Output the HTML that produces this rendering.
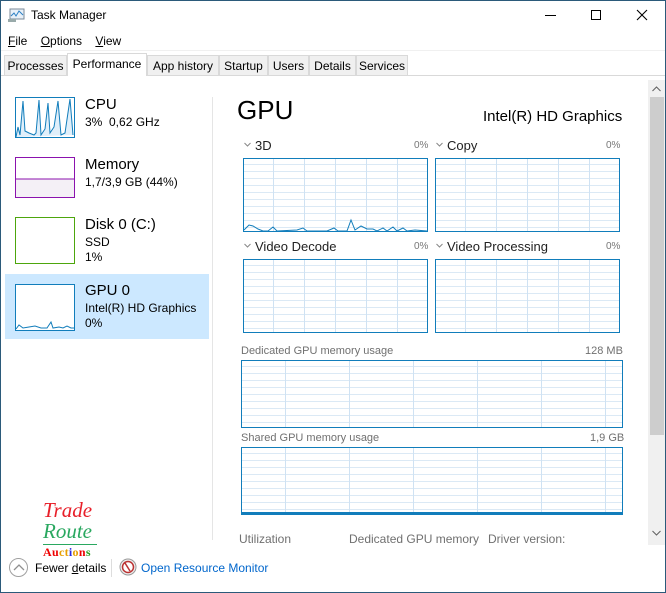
<!DOCTYPE html>
<html><head><meta charset="utf-8"><style>
*{margin:0;padding:0;box-sizing:border-box}
body{width:666px;height:593px;overflow:hidden;background:#fff;font-family:"Liberation Sans",sans-serif;color:#000;position:relative}
.a{position:absolute;white-space:nowrap}
.win{position:absolute;left:0;top:0;width:666px;height:593px;border:1px solid #2b5a7a}
.tab{position:absolute;top:55px;height:21px;background:#f0f0f0;border:1px solid #d9d9d9;font-size:12px;padding:3px 0 0 0;text-align:center}
.lbl{font-size:13px;color:#222}
.pct{font-size:10px;color:#777}
.g{position:absolute}
.chev{display:inline-block;width:7px;height:7px;margin-right:4px;vertical-align:2px}
</style></head><body>
<div class="win"></div>
<svg class="a" style="left:8px;top:8px" width="17" height="15"><rect x="2" y="1" width="14" height="10" fill="#e8f0f8" stroke="#7a8a99"/><polyline points="3,8 6,5 8,8 11,3 15,7" fill="none" stroke="#2a7fc4"/><rect x="0" y="11" width="8" height="3" fill="#9aa"/></svg>
<div class="a" style="left:31px;top:8px;font-size:12px">Task Manager</div>
<div class="a" style="left:545px;top:15px;width:11px;height:1px;background:#000"></div>
<div class="a" style="left:591px;top:10px;width:10px;height:10px;border:1px solid #000"></div>
<svg class="a" style="left:636px;top:9px" width="12" height="12"><path d="M1,1 L11,11 M11,1 L1,11" stroke="#000" stroke-width="1.1"/></svg>
<div class="a" style="left:8px;top:34px;font-size:12px"><u>F</u>ile&nbsp;&nbsp;&nbsp;&nbsp;<u>O</u>ptions&nbsp;&nbsp;&nbsp;&nbsp;<u>V</u>iew</div>
<div class="a" style="left:1px;top:50px;width:664px;height:1px;background:#f0f0f0"></div>
<div class="a" style="left:1px;top:75px;width:664px;height:1px;background:#d9d9d9"></div>
<div class="tab" style="left:4px;width:63px">Processes</div>
<div class="tab" style="left:67px;width:80px;top:53px;height:23px;background:#fff;border-bottom:none;padding-top:3px">Performance</div>
<div class="tab" style="left:147px;width:72px">App history</div>
<div class="tab" style="left:219px;width:49px">Startup</div>
<div class="tab" style="left:268px;width:41px">Users</div>
<div class="tab" style="left:309px;width:47px">Details</div>
<div class="tab" style="left:356px;width:52px">Services</div>

<svg class="a" style="left:15px;top:97px" width="60" height="41"><rect x="0.5" y="0.5" width="59" height="40" fill="#fff" stroke="#117dbb"/><polyline points="1,40 3,30 5,38 8,4 10,34 14,36 19,38 21,36 24,3 26,38 30,32 33,6 35,36 39,30 43,4 46,38 50,36 55,2 58,38" fill="#e0effa" stroke="#117dbb"/></svg>
<div class="a" style="left:85px;top:96px;font-size:15px">CPU</div>
<div class="a" style="left:85px;top:115px;font-size:12px">3%&nbsp; 0,62 GHz</div>
<svg class="a" style="left:15px;top:157px" width="60" height="41"><rect x="0.5" y="0.5" width="59" height="40" fill="#fff" stroke="#8b12ae"/><rect x="1" y="22" width="58" height="18" fill="#f4f0f6"/><line x1="1" y1="22" x2="59" y2="22" stroke="#8b12ae"/></svg>
<div class="a" style="left:85px;top:156px;font-size:15px">Memory</div>
<div class="a" style="left:85px;top:175px;font-size:12px">1,7/3,9 GB (44%)</div>
<svg class="a" style="left:15px;top:217px" width="60" height="47"><rect x="0.5" y="0.5" width="59" height="46" fill="#fff" stroke="#4da60c"/></svg>
<div class="a" style="left:85px;top:216px;font-size:15px">Disk 0 (C:)</div>
<div class="a" style="left:85px;top:235px;font-size:12px">SSD</div>
<div class="a" style="left:85px;top:250px;font-size:12px">1%</div>
<div class="a" style="left:5px;top:274px;width:204px;height:65px;background:#cce8ff"></div>
<svg class="a" style="left:15px;top:284px" width="60" height="47"><rect x="0.5" y="0.5" width="59" height="46" fill="#fff" stroke="#117dbb"/><polyline points="1,45 4,41 8,44 14,43 20,42 26,44 32,44 36,38 38,44 44,43 48,44 52,42 56,44 59,44" fill="none" stroke="#117dbb"/></svg>
<div class="a" style="left:85px;top:282px;font-size:15px">GPU 0</div>
<div class="a" style="left:85px;top:301px;font-size:12px">Intel(R) HD Graphics</div>
<div class="a" style="left:85px;top:316px;font-size:12px">0%</div>
<div class="a" style="left:212px;top:97px;width:1px;height:443px;background:#e5e5e5"></div>

<div class="a" style="left:237px;top:95px;font-size:26px">GPU</div>
<div class="a" style="left:483px;top:108px;font-size:15px">Intel(R) HD Graphics</div>

<svg width="0" height="0" style="position:absolute"><defs>
<pattern id="p" width="31" height="7" patternUnits="userSpaceOnUse"><line x1="0" y1="6.5" x2="31" y2="6.5" stroke="#dbe9f5"/><line x1="30.5" y1="0" x2="30.5" y2="7" stroke="#cfe2f3"/></pattern>
<pattern id="q" width="64" height="7" patternUnits="userSpaceOnUse"><line x1="0" y1="6.5" x2="64" y2="6.5" stroke="#dbe9f5"/><line x1="44.5" y1="0" x2="44.5" y2="7" stroke="#cfe2f3"/></pattern>
<symbol id="cv" viewBox="0 0 7 7"><polyline points="0.5,2 3.5,5 6.5,2" fill="none" stroke="#888"/></symbol>
</defs></svg>

<div class="a lbl" style="left:244px;top:138px"><svg class="chev"><use href="#cv"/></svg>3D</div>
<div class="a pct" style="left:414px;top:140px">0%</div>
<div class="a lbl" style="left:436px;top:138px"><svg class="chev"><use href="#cv"/></svg>Copy</div>
<div class="a pct" style="left:606px;top:140px">0%</div>
<svg class="g" style="left:243px;top:158px" width="185" height="74"><rect width="185" height="74" fill="url(#p)"/><polyline points="1,72 6,67 10,68 15,71 20,73 25,73 30,69 34,73 54,72 60,70 64,73 84,73 91,70 95,73 104,73 108,62 112,72 118,68 124,71 130,71 134,73 140,70 144,73 150,69 154,73 160,70 164,73 172,72 184,73" fill="none" stroke="#117dbb"/><rect x="0.5" y="0.5" width="184" height="73" fill="none" stroke="#117dbb"/></svg>
<svg class="g" style="left:435px;top:158px" width="185" height="74"><rect width="185" height="74" fill="url(#p)"/><rect x="0.5" y="0.5" width="184" height="73" fill="none" stroke="#117dbb"/></svg>

<div class="a lbl" style="left:244px;top:239px"><svg class="chev"><use href="#cv"/></svg>Video Decode</div>
<div class="a pct" style="left:414px;top:241px">0%</div>
<div class="a lbl" style="left:436px;top:239px"><svg class="chev"><use href="#cv"/></svg>Video Processing</div>
<div class="a pct" style="left:606px;top:241px">0%</div>
<svg class="g" style="left:243px;top:259px" width="185" height="74"><rect width="185" height="74" fill="url(#p)"/><rect x="0.5" y="0.5" width="184" height="73" fill="none" stroke="#117dbb"/></svg>
<svg class="g" style="left:435px;top:259px" width="185" height="74"><rect width="185" height="74" fill="url(#p)"/><rect x="0.5" y="0.5" width="184" height="73" fill="none" stroke="#117dbb"/></svg>

<div class="a" style="left:241px;top:345px;font-size:11px;color:#707070">Dedicated GPU memory usage</div>
<div class="a" style="left:585px;top:345px;font-size:11px;color:#707070">128 MB</div>
<svg class="g" style="left:241px;top:360px" width="382" height="68"><rect width="382" height="68" fill="url(#q)"/><rect x="0.5" y="0.5" width="381" height="67" fill="none" stroke="#117dbb"/></svg>
<div class="a" style="left:241px;top:432px;font-size:11px;color:#707070">Shared GPU memory usage</div>
<div class="a" style="left:590px;top:432px;font-size:11px;color:#707070">1,9 GB</div>
<svg class="g" style="left:241px;top:447px" width="382" height="68"><rect width="382" height="68" fill="url(#q)"/><line x1="1" y1="66" x2="381" y2="66" stroke="#117dbb" stroke-width="2"/><rect x="0.5" y="0.5" width="381" height="67" fill="none" stroke="#117dbb"/></svg>

<div class="a" style="left:239px;top:532px;font-size:12px;color:#707070">Utilization</div>
<div class="a" style="left:349px;top:532px;font-size:12px;color:#707070">Dedicated GPU memory</div>
<div class="a" style="left:488px;top:532px;font-size:12px;color:#707070">Driver version:</div>

<div class="a" style="left:648px;top:80px;width:17px;height:465px;background:#f0f0f0"></div>
<div class="a" style="left:650px;top:97px;width:14px;height:338px;background:#cdcdcd"></div>
<svg class="a" style="left:652px;top:86px" width="9" height="6"><polyline points="0.5,5 4.5,1 8.5,5" fill="none" stroke="#606060"/></svg>
<svg class="a" style="left:652px;top:530px" width="9" height="6"><polyline points="0.5,1 4.5,5 8.5,1" fill="none" stroke="#606060"/></svg>

<div class="a" style="left:43px;top:500px;font-family:'Liberation Serif',serif;font-style:italic;font-size:21px;color:#e8202a;line-height:21px">Trade</div>
<div class="a" style="left:43px;top:521px;font-family:'Liberation Serif',serif;font-style:italic;font-size:21px;color:#2aa860;line-height:21px">Route</div>
<div class="a" style="left:43px;top:544px;width:54px;height:1px;background:#2aa860"></div>
<div class="a" style="left:43px;top:545px;font-family:'Liberation Serif',serif;font-weight:bold;font-size:12px;letter-spacing:0.3px"><span style="color:#e00">Au</span><span style="color:#e8a000">ct</span><span style="color:#2a2ae0">i</span><span style="color:#e8a000">o</span><span style="color:#e00">n</span><span style="color:#2aa020">s</span></div>

<div class="a" style="left:9px;top:558px;width:19px;height:19px;border:1px solid #a0a0a0;border-radius:50%"></div>
<svg class="a" style="left:13px;top:563px" width="12" height="8"><polyline points="1,7 6,2 11,7" fill="none" stroke="#909090" stroke-width="1.3"/></svg>
<div class="a" style="left:35px;top:561px;font-size:12px">Fewer <u>d</u>etails</div>
<div class="a" style="left:111px;top:559px;width:1px;height:18px;background:#ddd"></div>
<svg class="a" style="left:119px;top:558px" width="18" height="18"><circle cx="9" cy="9" r="8" fill="#eee" stroke="#999"/><circle cx="9" cy="9" r="5.5" fill="#fff" stroke="#b33" stroke-width="1.5"/><line x1="6" y1="5" x2="11" y2="13" stroke="#b33" stroke-width="1.5"/></svg>
<div class="a" style="left:141px;top:561px;font-size:12px;color:#0066cc">Open Resource Monitor</div>
</body></html>
